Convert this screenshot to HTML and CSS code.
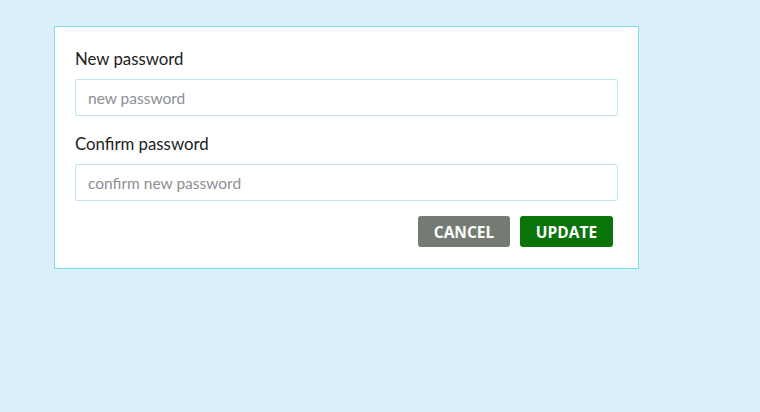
FILE: index.html
```html
<!DOCTYPE html>
<html>
<head>
<meta charset="utf-8">
<link rel="stylesheet" href="styles.css">
</head>
<body>
<form class="card">
  <label class="label" for="np">New password</label>
  <input class="field" id="np" type="password" placeholder="new password">
  <label class="label label-second" for="cp">Confirm password</label>
  <input class="field" id="cp" type="password" placeholder="confirm new password">
  <div class="actions">
    <button type="button" class="btn btn-cancel">CANCEL</button>
    <button type="button" class="btn btn-update">UPDATE</button>
  </div>
</form>
</body>
</html>
```
FILE: styles.css
```css
html, body {
  margin: 0;
  padding: 0;
  height: 100%;
  background: #d9f0fa;
}
body {
  font-family: "Lato", "Noto Sans", sans-serif;
  padding-top: 26px;
  box-sizing: border-box;
}
.card {
  margin-left: 54px;
  width: 585px;
  height: 243px;
  box-sizing: border-box;
  background: #fff;
  border: 1px solid #7fdfe7;
  padding: 20px 20px 20px 20px;
  display: flex;
  flex-direction: column;
}
.label {
  font-size: 16.8px;
  line-height: 24px;
  color: #222;
  margin-bottom: 8px;
}
.label-second {
  margin-top: 16px;
  margin-bottom: 8px;
}
.field {
  height: 37px;
  box-sizing: border-box;
  border: 1px solid #bfe7ee;
  border-radius: 2px;
  padding: 0 12px;
  font-family: inherit;
  font-size: 15.5px;
  color: #222;
  outline: none;
}
.field::placeholder {
  color: #8a9096;
}
.actions {
  display: flex;
  justify-content: flex-end;
  gap: 10px;
  margin-top: 15px;
  padding-right: 5px;
}
.btn {
  height: 31px;
  border: none;
  border-radius: 3px;
  color: #fff;
  font-family: "Open Sans", "Noto Sans", sans-serif;
  font-weight: 700;
  font-size: 15.5px;
  padding: 0;
  cursor: pointer;
}
.btn-cancel {
  width: 92px;
  background: #747b73;
}
.btn-update {
  width: 93px;
  background: #0a730a;
}
```
